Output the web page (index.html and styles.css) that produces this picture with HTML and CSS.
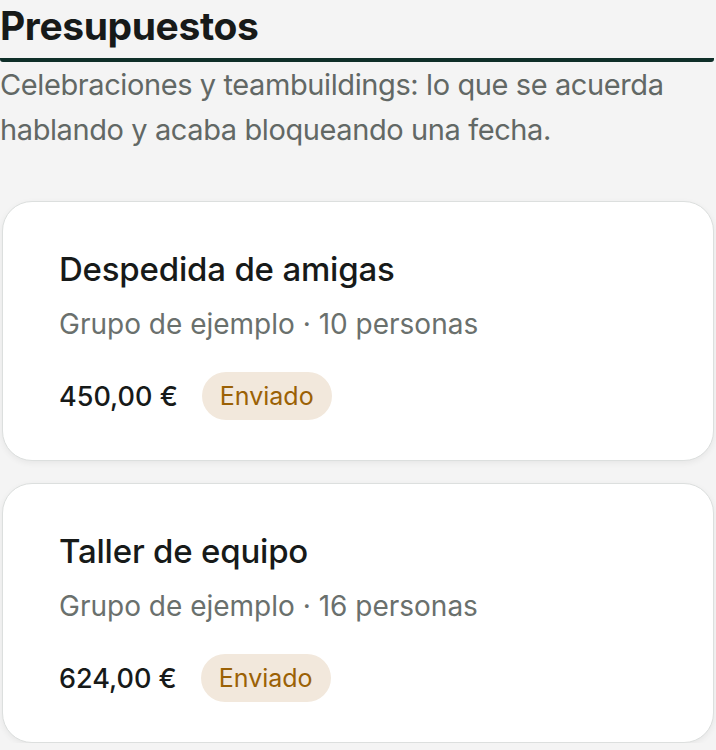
FILE: index.html
```html
<!DOCTYPE html>
<html lang="es">
<head>
    <meta charset="UTF-8">
    <meta name="viewport" content="width=device-width, initial-scale=1.0">
    <title>Presupuestos</title>
    <link rel="stylesheet" href="styles.css">
</head>
<body>
    <header class="page-head">
        <h1>Presupuestos</h1>
    </header>
    <p class="intro">Celebraciones y teambuildings: lo que se acuerda hablando y acaba bloqueando una fecha.</p>

    <div class="quotes">
        <div class="quote">
            <h3>Despedida de amigas</h3>
            <p class="meta">Grupo de ejemplo · 10 personas</p>
            <div class="quote-foot">
                <span class="price">450,00 €</span>
                <span class="status">Enviado</span>
            </div>
        </div>
        <div class="quote">
            <h3>Taller de equipo</h3>
            <p class="meta">Grupo de ejemplo · 16 personas</p>
            <div class="quote-foot">
                <span class="price">624,00 €</span>
                <span class="status">Enviado</span>
            </div>
        </div>
    </div>
</body>
</html>
```

FILE: styles.css
```css
body {
    font-family: Inter, "Noto Sans", sans-serif;
    margin: 0;
    padding: 0 2px 0 0;
    background-color: #f4f4f4;
    color: #171a19;
}
.page-head {
    border-bottom: 4px solid #0f2f29;
    border-radius: 0 0 3px 3px;
    padding: 4px 0 10px;
}
.page-head h1 {
    margin: 0;
    font-size: 39px;
    font-weight: 700;
    letter-spacing: -0.4px;
    line-height: 44px;
}
.intro {
    margin: 0;
    font-size: 29px;
    line-height: 45px;
    color: #626865;
    letter-spacing: -0.4px;
}
.quotes {
    display: flex;
    flex-direction: column;
    gap: 22px;
    margin-top: 49px;
    padding-left: 2px;
}
.quote {
    background: white;
    border: 1px solid #dcdfde;
    border-radius: 30px;
    padding: 47px 56px 40px;
    box-shadow: 0 2px 6px rgba(0, 0, 0, 0.06);
}
.quote h3 {
    margin: 0;
    font-size: 33px;
    font-weight: 500;
    line-height: 40px;
    letter-spacing: -0.2px;
}
.meta {
    margin: 19px 0 0;
    font-size: 28px;
    line-height: 32px;
    color: #6a706d;
}
.quote-foot {
    display: flex;
    align-items: center;
    gap: 24px;
    margin-top: 32px;
}
.price {
    font-size: 27px;
    font-weight: 500;
}
.status {
    background-color: #f2e8dc;
    color: #9b6105;
    font-size: 25px;
    line-height: 48px;
    padding: 0 18px;
    border-radius: 24px;
}
```
